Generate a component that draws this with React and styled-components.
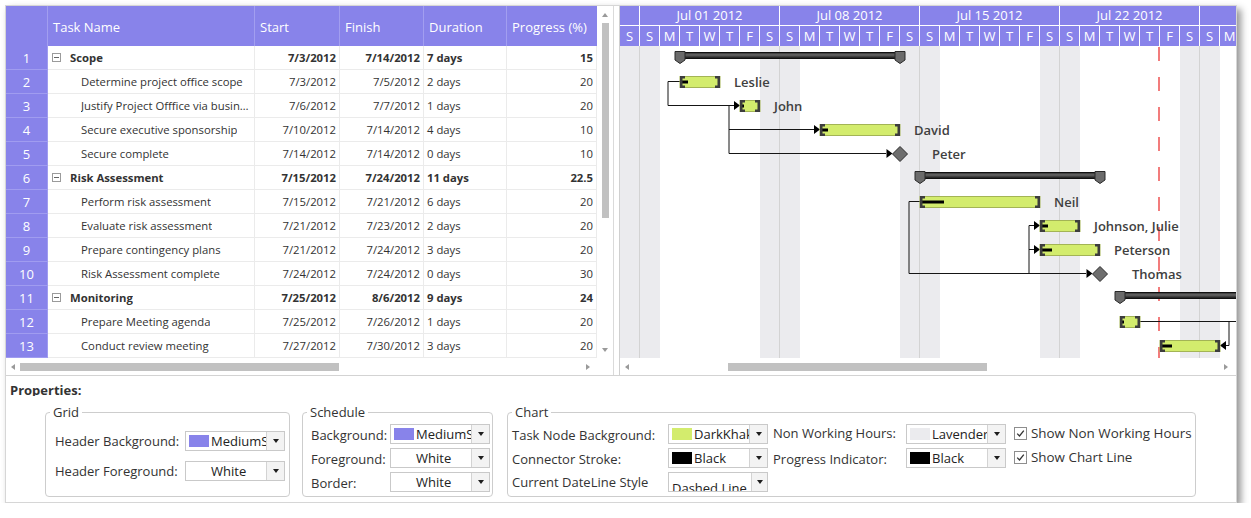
import React from 'react'
import styled, { createGlobalStyle } from 'styled-components'

const PURPLE = '#8883ea'
const FONT = `'Open Sans', 'Noto Sans', 'Liberation Sans', sans-serif`
const DAY = 20

const GlobalStyle = createGlobalStyle`
  html, body { margin: 0; padding: 0; background: #fff; }
  body { font-family: ${FONT}; color: #333; }
  * { box-sizing: border-box; }
`

const rows = [
  { name: 'Scope', start: '7/3/2012', finish: '7/14/2012', duration: '7 days', progress: '15', parent: true, bar: { kind: 'summary', from: 3, to: 14 } },
  { name: 'Determine project office scope', start: '7/3/2012', finish: '7/5/2012', duration: '2 days', progress: '20', bar: { kind: 'task', from: 3, to: 5, pct: 20, label: 'Leslie' } },
  { name: 'Justify Project Offfice via business case', start: '7/6/2012', finish: '7/7/2012', duration: '1 days', progress: '20', bar: { kind: 'task', from: 6, to: 7, pct: 20, label: 'John' } },
  { name: 'Secure executive sponsorship', start: '7/10/2012', finish: '7/14/2012', duration: '4 days', progress: '10', bar: { kind: 'task', from: 10, to: 14, pct: 10, label: 'David' } },
  { name: 'Secure complete', start: '7/14/2012', finish: '7/14/2012', duration: '0 days', progress: '10', bar: { kind: 'milestone', from: 14, label: 'Peter' } },
  { name: 'Risk Assessment', start: '7/15/2012', finish: '7/24/2012', duration: '11 days', progress: '22.5', parent: true, bar: { kind: 'summary', from: 15, to: 24 } },
  { name: 'Perform risk assessment', start: '7/15/2012', finish: '7/21/2012', duration: '6 days', progress: '20', bar: { kind: 'task', from: 15, to: 21, pct: 20, label: 'Neil' } },
  { name: 'Evaluate risk assessment', start: '7/21/2012', finish: '7/23/2012', duration: '2 days', progress: '20', bar: { kind: 'task', from: 21, to: 23, pct: 20, label: 'Johnson, Julie' } },
  { name: 'Prepare contingency plans', start: '7/21/2012', finish: '7/24/2012', duration: '3 days', progress: '20', bar: { kind: 'task', from: 21, to: 24, pct: 20, label: 'Peterson' } },
  { name: 'Risk Assessment complete', start: '7/24/2012', finish: '7/24/2012', duration: '0 days', progress: '30', bar: { kind: 'milestone', from: 24, label: 'Thomas' } },
  { name: 'Monitoring', start: '7/25/2012', finish: '8/6/2012', duration: '9 days', progress: '24', parent: true, bar: { kind: 'summary', from: 25, to: 37 } },
  { name: 'Prepare Meeting agenda', start: '7/25/2012', finish: '7/26/2012', duration: '1 days', progress: '20', bar: { kind: 'task', from: 25, to: 26, pct: 20 } },
  { name: 'Conduct review meeting', start: '7/27/2012', finish: '7/30/2012', duration: '3 days', progress: '20', bar: { kind: 'task', from: 27, to: 30, pct: 20 } },
]

const columns = [
  { key: 'name', title: 'Task Name' },
  { key: 'start', title: 'Start', align: 'right' },
  { key: 'finish', title: 'Finish', align: 'right' },
  { key: 'duration', title: 'Duration' },
  { key: 'progress', title: 'Progress (%)', align: 'right' },
]

// the last week runs past the visible edge, so its caption is out of view
const weeks = [
  { label: '', width: 20 },
  { label: 'Jul 01 2012', width: 140 },
  { label: 'Jul 08 2012', width: 140 },
  { label: 'Jul 15 2012', width: 140 },
  { label: 'Jul 22 2012', width: 140 },
  { label: '', width: 140 },
]

const dayLetters = Array.from({ length: 31 }, (_, i) => ['S', 'S', 'M', 'T', 'W', 'T', 'F'][i % 7])

// chart links, in chart coordinates
const links = [
  { d: 'M60 35.5 H48 V59.5 H114', arrow: [120, 59.5, 1] },
  { d: 'M109 59.5 V107.5 H266', arrow: [272.5, 107.5, 1] },
  { d: 'M109 83.5 H194', arrow: [200, 83.5, 1] },
  { d: 'M300 155.5 H289 V227.5 H466', arrow: [472.5, 227.5, 1] },
  { d: 'M409 227.5 V179.5 H414', arrow: [420, 179.5, 1] },
  { d: 'M409 203.5 H414', arrow: [420, 203.5, 1] },
  { d: 'M520 275.5 H620' },
  { d: 'M609 275.5 V299.5 H606', arrow: [600, 299.5, -1] },
]

const Window = styled.div`
  margin: 5px 0 0 5px;
  width: 1232px;
  height: 498px;
  border: 1px solid #d6d6d6;
  background: #fff;
  box-shadow: 4px 4px 7px rgba(0, 0, 0, 0.42);
  display: flex;
  flex-direction: column;
`

const Workspace = styled.div`
  display: flex;
  height: 370px;
  border-bottom: 1px solid #d3d3d3;
`

const GridPanel = styled.div`
  display: grid;
  grid-template-columns: 591px 16px;
  grid-template-rows: 352px 17px;
`

const Table = styled.div`
  display: flex;
  flex-direction: column;
  overflow: hidden;
`

const ROW_TEMPLATE = '42px 207px 85px 84px 83px 90px'

const HeaderRow = styled.div`
  display: grid;
  grid-template-columns: ${ROW_TEMPLATE};
  height: 40px;
  background: ${PURPLE};
`

const HeaderCell = styled.div`
  display: flex;
  align-items: center;
  padding: 2px 0 0 5px;
  color: #fff;
  font-size: 13px;
  border-right: 1px solid #a29ef0;
  &:last-child { border-right: none; }
`

const BodyRow = styled.div`
  display: grid;
  grid-template-columns: ${ROW_TEMPLATE};
  height: 24px;
`

const RowNumber = styled.div`
  display: flex;
  align-items: center;
  justify-content: center;
  background: ${PURPLE};
  color: #fff;
  font-size: 13px;
  border-bottom: 1px solid #a09cf0;
  border-right: 1px solid #a09cf0;
`

const Cell = styled.div`
  display: flex;
  align-items: center;
  justify-content: ${({ $align }) => ($align === 'right' ? 'flex-end' : 'flex-start')};
  padding: 0 3px;
  font-size: 11.3px;
  font-weight: ${({ $bold }) => ($bold ? 700 : 400)};
  color: #333;
  white-space: nowrap;
  overflow: hidden;
  border-right: 1px solid #ebebeb;
  border-bottom: 1px solid #ebebeb;
`

const NameCell = styled(Cell)`
  padding-left: ${({ $child }) => ($child ? 33 : 4)}px;
`

const NameText = styled.span`
  overflow: hidden;
  text-overflow: ellipsis;
`

const Expander = styled.span`
  flex: 0 0 9px;
  height: 9px;
  margin-right: 9px;
  border: 1px solid #9b9b9b;
  display: flex;
  align-items: center;
  justify-content: center;
  &::before {
    content: '';
    width: 5px;
    height: 1px;
    background: #666;
  }
`

const VScroll = styled.div`
  display: flex;
  flex-direction: column;
  align-items: center;
  background: #fff;
`

const HScroll = styled.div`
  display: flex;
  align-items: center;
  height: 17px;
  background: #fff;
`

const ArrowBox = styled.div`
  flex: 0 0 ${({ $size }) => $size || 17}px;
  width: ${({ $size }) => $size || 17}px;
  height: 17px;
  margin-right: ${({ $gapRight }) => $gapRight || 0}px;
  display: flex;
  align-items: center;
  justify-content: center;
  &::after {
    content: '';
    border: 3.5px solid transparent;
    ${({ $dir }) => ($dir === 'up' ? 'border-bottom: 4px solid #9a9a9a; border-top-width: 0;' : '')}
    ${({ $dir }) => ($dir === 'down' ? 'border-top: 4px solid #9a9a9a; border-bottom-width: 0;' : '')}
    ${({ $dir }) => ($dir === 'left' ? 'border-right: 4px solid #9a9a9a; border-left-width: 0;' : '')}
    ${({ $dir }) => ($dir === 'right' ? 'border-left: 4px solid #9a9a9a; border-right-width: 0;' : '')}
  }
`

const Thumb = styled.div`
  flex: 0 0 auto;
  background: #c1c1c1;
  width: ${({ $w }) => $w}px;
  height: ${({ $h }) => $h}px;
  margin-left: ${({ $offset }) => $offset || 0}px;
`

const Spacer = styled.div`
  flex: 1;
`

const Splitter = styled.div`
  flex: 0 0 7px;
  border-left: 1px solid #dadada;
  border-right: 1px solid #d0d0d0;
  background: #fff;
`

const GanttPanel = styled.div`
  flex: 0 0 616px;
  width: 616px;
  display: flex;
  flex-direction: column;
  overflow: hidden;
`

const Timeline = styled.div`
  height: 40px;
  background: ${PURPLE};
  display: flex;
  flex-direction: column;
`

const WeekRow = styled.div`
  display: flex;
  height: 20px;
  border-bottom: 1px solid #fff;
`

const WeekCell = styled.div`
  flex: 0 0 ${({ $w }) => $w}px;
  border-right: 1px solid #fff;
  color: #fff;
  font-size: 13px;
  line-height: 19px;
  text-align: center;
  white-space: nowrap;
  overflow: hidden;
`

const DayRow = styled.div`
  display: flex;
  height: 20px;
`

const DayCell = styled.div`
  flex: 0 0 ${DAY}px;
  border-right: 1px solid #fff;
  color: #fff;
  font-size: 13px;
  line-height: 20px;
  text-align: center;
`

const ChartSvg = styled.svg`
  display: block;
  flex: 0 0 312px;
`

const BarLabel = styled.text`
  font-family: ${FONT};
  font-size: 13px;
  font-weight: 600;
  fill: #404040;
`

const Link = styled.path`
  fill: none;
  stroke: #151515;
  stroke-width: 1;
`

const Properties = styled.div`
  flex: 1;
  display: flex;
  flex-direction: column;
`

const PropsTitle = styled.div`
  height: 20px;
  padding: 6px 0 0 4px;
  font-size: 13px;
  line-height: 16px;
  font-weight: 700;
  color: #333;
  overflow: hidden;
`

const Groups = styled.div`
  display: flex;
  align-items: flex-start;
  margin: 8px 0 0 39px;
`

const Group = styled.fieldset`
  width: ${({ $w }) => $w}px;
  height: 93px;
  margin: 0 ${({ $gap }) => $gap || 0}px 0 0;
  padding: 0 0 0 4px;
  border: 1px solid #cdcdcd;
  border-radius: 4px;
  min-width: 0;
`

const Legend = styled.legend`
  padding: 0 3px;
  font-size: 13px;
  line-height: 17px;
  color: #333;
`

const FieldGrid = styled.div`
  display: grid;
  grid-template-columns: ${({ $cols }) => $cols};
  grid-auto-rows: 20px;
  row-gap: ${({ $rowGap }) => $rowGap}px;
  align-items: center;
  margin: ${({ $top }) => $top}px 0 0 ${({ $left }) => $left || 0}px;
`

const Label = styled.div`
  font-size: 13px;
  color: #333;
  white-space: nowrap;
  padding-left: ${({ $pad }) => $pad || 0}px;
  margin-top: ${({ $shift }) => $shift || 0}px;
`

const ComboBox = styled.div`
  width: 100px;
  height: 20px;
  display: flex;
  align-items: center;
  border: 1px solid #c9c9c9;
  background: #fff;
  overflow: hidden;
`

const Swatch = styled.span`
  flex: 0 0 20px;
  height: 12px;
  margin-left: 3px;
  background: ${({ $color }) => $color};
`

const ComboText = styled.span`
  flex: 1;
  align-self: stretch;
  padding: ${({ $sunk }) => ($sunk ? '6px 0 0 3px' : '0 0 0 2px')};
  font-size: 13px;
  line-height: 18px;
  color: #222;
  white-space: nowrap;
  overflow: hidden;
`

const DropButton = styled.span`
  flex: 0 0 ${({ $w }) => $w || 18}px;
  align-self: stretch;
  background: #f3f3f3;
  border-left: 1px solid #d3d3d3;
  display: flex;
  align-items: center;
  justify-content: center;
  &::after {
    content: '';
    border-left: 3.5px solid transparent;
    border-right: 3.5px solid transparent;
    border-top: 4px solid #1e1e1e;
  }
`

const CheckRow = styled.label`
  display: flex;
  align-items: center;
  gap: 4px;
  margin-left: 8px;
  margin-top: -2px;
  font-size: 13.4px;
  color: #333;
  white-space: nowrap;
`

const CheckBox = styled.span`
  flex: 0 0 13px;
  height: 13px;
  border: 1px solid #8e8e8e;
  background: #fff;
  display: flex;
  align-items: center;
  justify-content: center;
`

const Combo = ({ swatch, text, sunk, btn }) => (
  <ComboBox>
    {swatch && <Swatch $color={swatch} />}
    <ComboText $sunk={sunk}>{text}</ComboText>
    <DropButton $w={btn} />
  </ComboBox>
)

const Check = ({ children }) => (
  <CheckRow>
    <CheckBox>
      <svg width="9" height="9" viewBox="0 0 9 9">
        <path d="M1.2 4.6 L3.5 7 L7.8 1.6" fill="none" stroke="#333" strokeWidth="1.3" />
      </svg>
    </CheckBox>
    {children}
  </CheckRow>
)

const TaskBar = ({ x, w, cy, pct }) => {
  const top = cy - 6
  const pw = Math.max(2, (pct / 100) * w - 2)
  return (
    <g>
      <rect x={x} y={cy - 5.5} width={w} height={11} fill="#d3ec6d" stroke="#a3b455" strokeWidth="1" />
      <rect x={x + 2} y={cy - 1.5} width={pw} height={3} fill="#000" />
      <path d={`M${x} ${top} h5 v2.5 h-2.5 v7 h2.5 v2.5 h-5 z`} fill="#3d3d3d" />
      <path d={`M${x + w} ${top} h-5 v2.5 h2.5 v7 h-2.5 v2.5 h5 z`} fill="#3d3d3d" />
    </g>
  )
}

const SummaryBar = ({ x, w, cy }) => {
  const cap = (cx) =>
    `${cx - 5},${cy - 6.5} ${cx + 5},${cy - 6.5} ${cx + 5},${cy + 2} ${cx},${cy + 5.5} ${cx - 5},${cy + 2}`
  return (
    <g>
      <rect x={x} y={cy - 5.5} width={w} height={6} fill="url(#sumFill)" stroke="#111" strokeWidth="1" />
      <polygon points={cap(x)} fill="#6b6b6b" stroke="#2a2a2a" strokeWidth="1" />
      <polygon points={cap(x + w)} fill="#6b6b6b" stroke="#2a2a2a" strokeWidth="1" />
    </g>
  )
}

const Milestone = ({ x, cy }) => (
  <polygon
    points={`${x},${cy - 7.5} ${x + 7.5},${cy} ${x},${cy + 7.5} ${x - 7.5},${cy}`}
    fill="#6e6e6e"
    stroke="#2d2d2d"
    strokeWidth="1"
  />
)

const Chart = () => {
  const shade = [0, 140, 280, 420, 560]
  const weekLines = [19.5, 159.5, 299.5, 439.5, 579.5]
  return (
    <ChartSvg width="616" height="312">
      <defs>
        <linearGradient id="sumFill" x1="0" y1="0" x2="0" y2="1">
          <stop offset="0" stopColor="#2a2a2a" />
          <stop offset="0.4" stopColor="#666" />
          <stop offset="0.75" stopColor="#333" />
          <stop offset="1" stopColor="#111" />
        </linearGradient>
      </defs>
      {shade.map((x) => (
        <rect key={x} x={x} y={0} width={40} height={312} fill="#ebebee" />
      ))}
      {weekLines.map((x) => (
        <line key={x} x1={x} x2={x} y1={0} y2={312} stroke="#d3d3d3" strokeWidth="1" />
      ))}
      <line x1={539} x2={539} y1={1} y2={312} stroke="#f27c7c" strokeWidth="2" strokeDasharray="14 16" />
      {links.map((l, i) => (
        <g key={i}>
          <Link d={l.d} />
          {l.arrow && (
            <polygon
              points={`${l.arrow[0] - 6 * l.arrow[2]},${l.arrow[1] - 4.5} ${l.arrow[0]},${l.arrow[1]} ${l.arrow[0] - 6 * l.arrow[2]},${l.arrow[1] + 4.5}`}
              fill="#000"
            />
          )}
        </g>
      ))}
      {rows.map((r, i) => {
        const cy = 12 + 24 * i
        const b = r.bar
        const x = b.from * DAY
        if (b.kind === 'summary') return <SummaryBar key={i} x={x} w={(b.to - b.from) * DAY} cy={cy} />
        if (b.kind === 'milestone')
          return (
            <g key={i}>
              <Milestone x={x} cy={cy} />
              <BarLabel x={x + 32} y={cy + 5}>{b.label}</BarLabel>
            </g>
          )
        const w = (b.to - b.from) * DAY
        return (
          <g key={i}>
            <TaskBar x={x} w={w} cy={cy} pct={b.pct} />
            {b.label && <BarLabel x={x + w + 14} y={cy + 5}>{b.label}</BarLabel>}
          </g>
        )
      })}
    </ChartSvg>
  )
}

const App = () => (
  <>
    <GlobalStyle />
    <Window>
      <Workspace>
        <GridPanel>
          <Table>
            <HeaderRow>
              <HeaderCell />
              {columns.map((c) => (
                <HeaderCell key={c.key}>{c.title}</HeaderCell>
              ))}
            </HeaderRow>
            {rows.map((r, i) => (
              <BodyRow key={i}>
                <RowNumber>{i + 1}</RowNumber>
                <NameCell $child={!r.parent} $bold={r.parent}>
                  {r.parent && <Expander />}
                  <NameText>{r.name}</NameText>
                </NameCell>
                <Cell $align="right" $bold={r.parent}>{r.start}</Cell>
                <Cell $align="right" $bold={r.parent}>{r.finish}</Cell>
                <Cell $bold={r.parent}>{r.duration}</Cell>
                <Cell $align="right" $bold={r.parent}>{r.progress}</Cell>
              </BodyRow>
            ))}
          </Table>
          <VScroll>
            <ArrowBox $dir="up" />
            <Thumb $w={7} $h={195} />
            <Spacer />
            <ArrowBox $dir="down" />
          </VScroll>
          <HScroll>
            <ArrowBox $dir="left" $size={14} />
            <Thumb $w={319} $h={8} />
            <Spacer />
            <ArrowBox $dir="right" $size={18} />
          </HScroll>
          <div />
        </GridPanel>
        <Splitter />
        <GanttPanel>
          <Timeline>
            <WeekRow>
              {weeks.map((w, i) => (
                <WeekCell key={i} $w={w.width}>{w.label}</WeekCell>
              ))}
            </WeekRow>
            <DayRow>
              {dayLetters.map((d, i) => (
                <DayCell key={i}>{d}</DayCell>
              ))}
            </DayRow>
          </Timeline>
          <Chart />
          <HScroll>
            <ArrowBox $dir="left" $size={14} />
            <Thumb $w={259} $h={8} $offset={94} />
            <Spacer />
            <ArrowBox $dir="right" $size={14} $gapRight={3} />
          </HScroll>
        </GanttPanel>
      </Workspace>
      <Properties>
        <PropsTitle>Properties:</PropsTitle>
        <Groups>
          <Group $w={245} $gap={12}>
            <Legend>Grid</Legend>
            <FieldGrid $cols="130px 100px" $rowGap={10} $top={10} $left={5}>
              <Label>Header Background:</Label>
              <Combo swatch={PURPLE} text="MediumSlateBlue" />
              <Label>Header Foreground:</Label>
              <Combo swatch="#fff" text="White" />
            </FieldGrid>
          </Group>
          <Group $w={191} $gap={14}>
            <Legend>Schedule</Legend>
            <FieldGrid $cols="79px 100px" $rowGap={4} $top={3} $left={4}>
              <Label $shift={2}>Background:</Label>
              <Combo swatch={PURPLE} text="MediumSlateBlue" />
              <Label $shift={2}>Foreground:</Label>
              <Combo swatch="#fff" text="White" />
              <Label $shift={2}>Border:</Label>
              <Combo swatch="#fff" text="White" />
            </FieldGrid>
          </Group>
          <Group $w={689}>
            <Legend>Chart</Legend>
            <FieldGrid $cols="156px 100px 138px 100px auto" $rowGap={4} $top={3}>
              <Label $shift={2}>Task Node Background:</Label>
              <Combo swatch="#d3ec6d" text="DarkKhaki" />
              <Label $pad={5} $shift={-2}>Non Working Hours:</Label>
              <Combo swatch="#ebebee" text="Lavender" />
              <Check>Show Non Working Hours</Check>
              <Label $shift={2}>Connector Stroke:</Label>
              <Combo swatch="#000" text="Black" />
              <Label $pad={5} $shift={2}>Progress Indicator:</Label>
              <Combo swatch="#000" text="Black" />
              <Check>Show Chart Line</Check>
              <Label>Current DateLine Style</Label>
              <Combo text="Dashed Line" sunk btn={16} />
            </FieldGrid>
          </Group>
        </Groups>
      </Properties>
    </Window>
  </>
)

export default App
